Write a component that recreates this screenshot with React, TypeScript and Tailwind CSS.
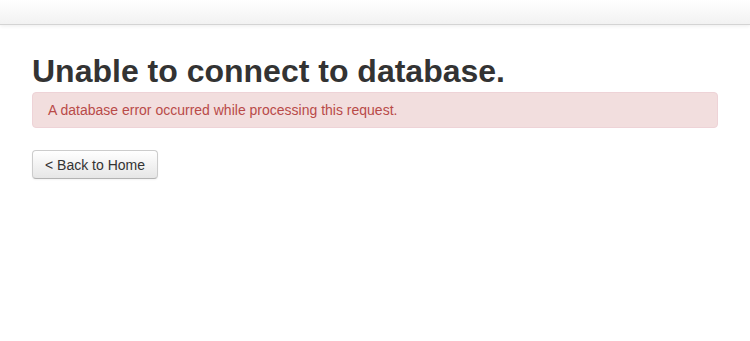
export default function App() {
  return (
    <div className="min-h-[341px] bg-white font-['Liberation_Sans',Arial,sans-serif]">
      <div className="h-[25px] border-b border-[#d4d4d4] bg-gradient-to-b from-white to-[#f2f2f2] shadow-[0_1px_4px_rgba(0,0,0,0.08)]" />
      <div className="px-[32px]">
        <h1 className="mt-[26px] text-[32px] font-bold leading-[40px] text-[#333]">
          Unable to connect to database.
        </h1>
        <div className="mt-[1px] w-[686px] rounded-[4px] border border-[#eed3d7] bg-[#f2dede] px-[15px] py-[8px] text-[14px] leading-[18px] text-[#b94a48]">
          A database error occurred while processing this request.
        </div>
        <button className="mt-[22px] h-[29px] w-[126px] rounded-[4px] border border-[#cccccc] border-b-[#b3b3b3] bg-gradient-to-b from-white to-[#e6e6e6] text-[14px] leading-[20px] text-[#333] shadow-[0_1px_2px_rgba(0,0,0,0.05)]">
          &lt; Back to Home
        </button>
      </div>
    </div>
  )
}
